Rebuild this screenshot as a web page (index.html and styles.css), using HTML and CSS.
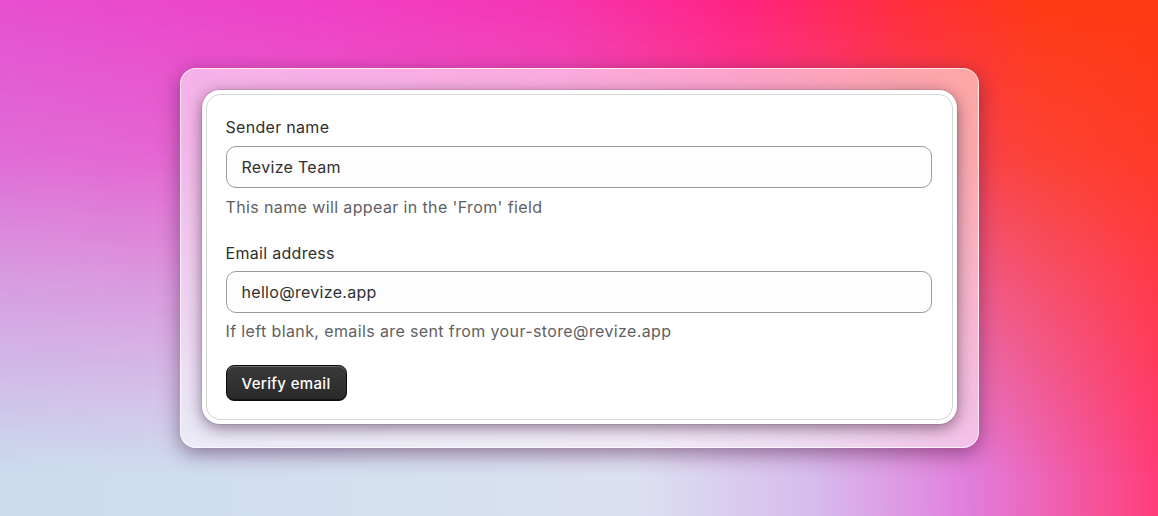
FILE: index.html
```html
<!DOCTYPE html>
<html>
<head>
<meta charset="utf-8">
<link rel="stylesheet" href="styles.css">
</head>
<body>
<div class="stage">
  <div class="frame">
    <div class="card">
      <div class="card-inner">
        <div class="field">
          <label class="label">Sender name</label>
          <div class="input">Revize Team</div>
          <div class="help">This name will appear in the 'From' field</div>
        </div>
        <div class="field">
          <label class="label">Email address</label>
          <div class="input">hello@revize.app</div>
          <div class="help">If left blank, emails are sent from your-store@revize.app</div>
        </div>
        <div class="actions">
          <button class="btn">Verify email</button>
        </div>
      </div>
    </div>
  </div>
</div>
</body>
</html>
```
FILE: styles.css
```css
html, body {
  margin: 0;
  padding: 0;
  height: 100%;
}
body {
  font-family: Inter, "Noto Sans", sans-serif;
  overflow: hidden;
}
.stage {
  position: relative;
  width: 1158px;
  height: 516px;
  display: flex;
  align-items: center;
  justify-content: center;
  background: linear-gradient(to right, #e650d0 0%, #f040c6 28%, #f535b2 48%, #ff2380 64%, #ff2e3c 78%, #ff3a14 90%, #ff3a12 100%);
}
.stage::before {
  content: "";
  position: absolute;
  inset: 0;
  background: linear-gradient(to right, #cadcee 0%, #d4e0f0 35%, #dce0f2 55%, #d6bcec 70%, #e27cdc 84%, #ff3c78 100%);
  -webkit-mask-image: linear-gradient(to bottom, transparent 0%, rgba(0,0,0,0.2) 30%, rgba(0,0,0,0.55) 55%, #000 92%);
  mask-image: linear-gradient(to bottom, transparent 0%, rgba(0,0,0,0.2) 30%, rgba(0,0,0,0.55) 55%, #000 92%);
}
.frame {
  position: relative;
  width: 799px;
  height: 380px;
  box-sizing: border-box;
  padding: 22px;
  border-radius: 16px;
  background: rgba(255,255,255,0.55);
  border: 1px solid rgba(255,255,255,0.7);
  box-shadow: 0 5px 20px rgba(60,20,60,0.5);
}
.card {
  height: 100%;
  box-sizing: border-box;
  margin: -1px;
  padding: 4px;
  background: #fff;
  border-radius: 18px;
  box-shadow: 0 4px 16px rgba(40,10,40,0.5), 0 0 0 1px rgba(0,0,0,0.08);
}
.card-inner {
  height: 100%;
  box-sizing: border-box;
  border: 1px solid #d6d6d6;
  border-radius: 14px;
  padding: 20px 20px 20px 19px;
  display: flex;
  flex-direction: column;
  gap: 22px;
}
.field {
  display: flex;
  flex-direction: column;
}
.label {
  font-size: 16px;
  line-height: 24px;
  letter-spacing: 0.3px;
  color: #303030;
}
.input {
  margin-top: 7px;
  height: 42px;
  box-sizing: border-box;
  border: 1px solid #9a9a9a;
  border-radius: 10px;
  background: #fdfdfd;
  padding: 0 15px;
  display: flex;
  align-items: center;
  font-size: 16px;
  letter-spacing: 0.3px;
  color: #303030;
}
.help {
  margin-top: 7px;
  font-size: 16px;
  line-height: 24px;
  letter-spacing: 0.38px;
  color: #616161;
}
.field + .field .input { margin-top: 6px; }
.field + .field .help { margin-top: 6px; }
.actions {
  display: flex;
}
.btn {
  height: 36px;
  padding: 0 15px;
  border-radius: 8px;
  border: 1px solid #0c0c0c;
  background: linear-gradient(#3a3a3a, #2a2a2a);
  box-shadow: inset 0 1px 0 rgba(255,255,255,0.25), inset 0 -1px 0 rgba(0,0,0,0.5);
  color: #fff;
  font-family: Inter, "Noto Sans", sans-serif;
  font-size: 15px;
  font-weight: 500;
  letter-spacing: 0.35px;
}
```
